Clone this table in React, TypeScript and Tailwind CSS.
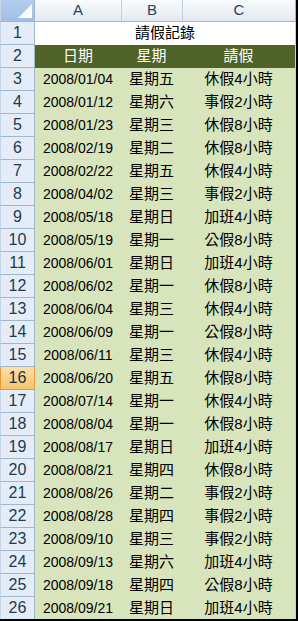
const rows: [string, string, string][] = [
  ['2008/01/04', '星期五', '休假4小時'],
  ['2008/01/12', '星期六', '事假2小時'],
  ['2008/01/23', '星期三', '休假8小時'],
  ['2008/02/19', '星期二', '休假8小時'],
  ['2008/02/22', '星期五', '休假4小時'],
  ['2008/04/02', '星期三', '事假2小時'],
  ['2008/05/18', '星期日', '加班4小時'],
  ['2008/05/19', '星期一', '公假8小時'],
  ['2008/06/01', '星期日', '加班4小時'],
  ['2008/06/02', '星期一', '休假8小時'],
  ['2008/06/04', '星期三', '休假4小時'],
  ['2008/06/09', '星期一', '公假8小時'],
  ['2008/06/11', '星期三', '休假4小時'],
  ['2008/06/20', '星期五', '休假8小時'],
  ['2008/07/14', '星期一', '休假4小時'],
  ['2008/08/04', '星期一', '休假8小時'],
  ['2008/08/17', '星期日', '加班4小時'],
  ['2008/08/21', '星期四', '休假8小時'],
  ['2008/08/26', '星期二', '事假2小時'],
  ['2008/08/28', '星期四', '事假2小時'],
  ['2008/09/10', '星期三', '事假2小時'],
  ['2008/09/13', '星期六', '加班4小時'],
  ['2008/09/18', '星期四', '公假8小時'],
  ['2008/09/21', '星期日', '加班4小時'],
]

const cellFont = { fontFamily: '"Liberation Sans", "Noto Sans CJK TC", sans-serif' }
const headFont = { fontFamily: '"Liberation Sans", sans-serif' }

// active row gets the orange header
const ACTIVE_ROW = 16

function RowHead({ n }: { n: number }) {
  const active = n === ACTIVE_ROW
  return (
    <div
      style={headFont}
      className={
        'flex w-[35px] shrink-0 items-center justify-center border-r border-b border-l text-[16px] ' +
        (active
          ? 'border-[#f29536] border-l-[#f29536] bg-gradient-to-b from-[#fbe0a8] to-[#f5c46a] text-[#1d2f44]'
          : 'border-[#9eb6ce] border-l-[#c5d5e8] bg-[#e4ecf7] text-[#1d3a52]')
      }
    >
      {n}
    </div>
  )
}

export default function App() {
  return (
    <div className="h-[621px] w-[298px] overflow-hidden border-r-2 border-b-2 border-black bg-white">
      {/* column headers */}
      <div className="flex h-[22px] border-b border-[#9eb6ce] bg-gradient-to-b from-[#f9fbfd] to-[#e2e9f2] text-[15px] text-[#27415e]" style={headFont}>
        <div className="relative w-[35px] shrink-0 border-r border-l border-[#9eb6ce] border-l-[#c5d5e8] bg-gradient-to-b from-[#b4cdee] to-[#a2bde6]">
          <svg className="absolute top-[4px] left-[17px]" width="15" height="15" viewBox="0 0 15 15">
            <defs>
              <linearGradient id="tri" x1="0" y1="0" x2="1" y2="1">
                <stop offset="0" stopColor="#e8f0fb" />
                <stop offset="1" stopColor="#ffffff" />
              </linearGradient>
            </defs>
            <polygon points="14,0 14,14 0,14" fill="url(#tri)" />
          </svg>
        </div>
        <div className="flex w-[87px] shrink-0 items-center justify-center border-r border-[#c3d0e0]">A</div>
        <div className="flex w-[61px] shrink-0 items-center justify-center border-r border-[#c3d0e0]">B</div>
        <div className="flex w-[113px] shrink-0 items-center justify-center border-r border-[#9eb6ce]">C</div>
      </div>

      {/* title row */}
      <div className="flex h-[23px]">
        <RowHead n={1} />
        <div style={cellFont} className="flex flex-1 items-center justify-center border-r border-[#c3d0e0] text-[15px] text-black">
          請假記錄
        </div>
      </div>

      {/* field names */}
      <div className="flex h-[23px]">
        <RowHead n={2} />
        <div style={cellFont} className="flex flex-1 border-r border-[#c3d0e0] bg-[#4f6228] text-[15px] text-white">
          <div className="flex w-[86px] items-center justify-center">日期</div>
          <div className="flex w-[61px] items-center justify-center">星期</div>
          <div className="flex flex-1 items-center justify-center">請假</div>
        </div>
      </div>

      {rows.map(([date, day, leave], i) => (
        <div key={date} className="flex h-[23px]">
          <RowHead n={i + 3} />
          <div style={cellFont} className="flex flex-1 border-r border-[#c3d0e0] bg-[#d8e4bc] text-[15px] text-black">
            <div className="flex w-[86px] items-center justify-center text-[14px]">{date}</div>
            <div className="flex w-[61px] items-center justify-center">{day}</div>
            <div className="flex flex-1 items-center justify-center">{leave}</div>
          </div>
        </div>
      ))}
    </div>
  )
}
